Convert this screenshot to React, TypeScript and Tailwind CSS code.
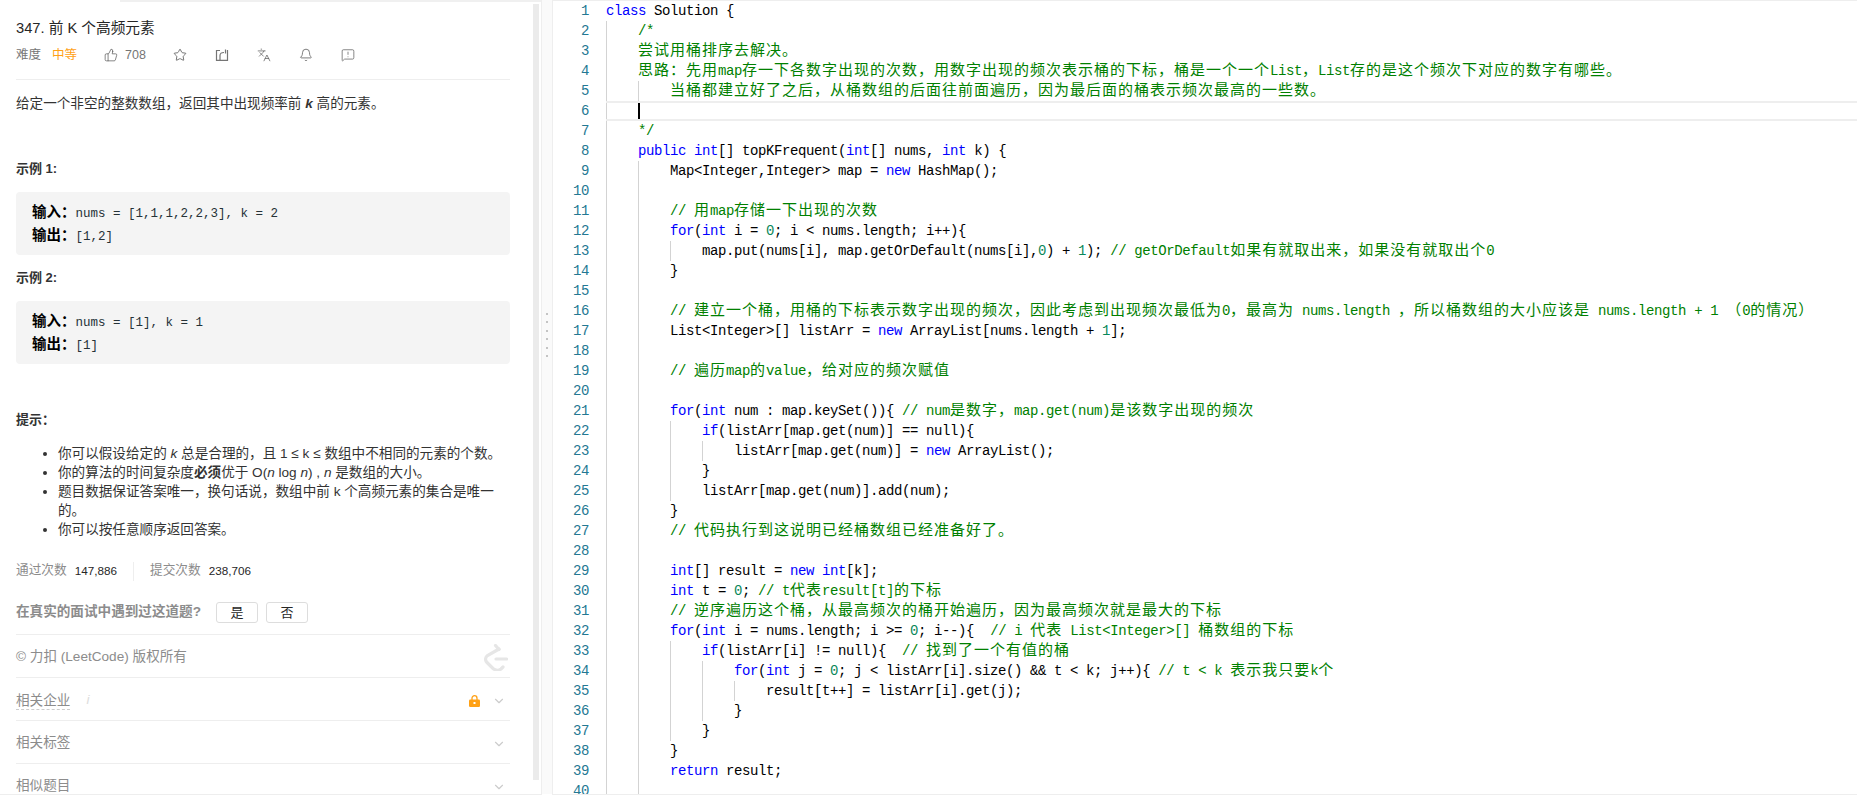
import { Bell, ChevronDown, Languages, MessageSquareWarning, Star, ThumbsUp } from "lucide-react";

const code = [
  "class Solution {",
  "    /*",
  "    尝试用桶排序去解决。",
  "    思路：先用map存一下各数字出现的次数，用数字出现的频次表示桶的下标，桶是一个一个List，List存的是这个频次下对应的数字有哪些。",
  "        当桶都建立好了之后，从桶数组的后面往前面遍历，因为最后面的桶表示频次最高的一些数。",
  "",
  "    */",
  "    public int[] topKFrequent(int[] nums, int k) {",
  "        Map<Integer,Integer> map = new HashMap();",
  "",
  "        // 用map存储一下出现的次数",
  "        for(int i = 0; i < nums.length; i++){",
  "            map.put(nums[i], map.getOrDefault(nums[i],0) + 1); // getOrDefault如果有就取出来，如果没有就取出个0",
  "        }",
  "",
  "        // 建立一个桶，用桶的下标表示数字出现的频次，因此考虑到出现频次最低为0，最高为 nums.length ，所以桶数组的大小应该是 nums.length + 1 （0的情况）",
  "        List<Integer>[] listArr = new ArrayList[nums.length + 1];",
  "",
  "        // 遍历map的value，给对应的频次赋值",
  "",
  "        for(int num : map.keySet()){ // num是数字，map.get(num)是该数字出现的频次",
  "            if(listArr[map.get(num)] == null){",
  "                listArr[map.get(num)] = new ArrayList();",
  "            }",
  "            listArr[map.get(num)].add(num);",
  "        }",
  "        // 代码执行到这说明已经桶数组已经准备好了。",
  "",
  "        int[] result = new int[k];",
  "        int t = 0; // t代表result[t]的下标",
  "        // 逆序遍历这个桶，从最高频次的桶开始遍历，因为最高频次就是最大的下标",
  "        for(int i = nums.length; i >= 0; i--){  // i 代表 List<Integer>[] 桶数组的下标",
  "            if(listArr[i] != null){  // 找到了一个有值的桶",
  "                for(int j = 0; j < listArr[i].size() && t < k; j++){ // t < k 表示我只要k个",
  "                    result[t++] = listArr[i].get(j);",
  "                }",
  "            }",
  "        }",
  "        return result;",
  "",
];

// CJK runs need to fill two monospace cells
function Cells({ text }: { text: string }) {
  const parts = text.split(/([\u3000-\u9fff\uff00-\uffef]+)/);
  return (
    <>
      {parts.map((p, i) =>
        i % 2 === 1 ? (
          <span key={i} className="text-[15px] tracking-[1px]">
            {p}
          </span>
        ) : (
          <span key={i}>{p}</span>
        )
      )}
    </>
  );
}

function CodeText({ text, comment }: { text: string; comment: boolean }) {
  if (comment) {
    return (
      <span className="text-[#008000]">
        <Cells text={text} />
      </span>
    );
  }
  const out = [];
  const re = /(\/\/.*$)|\b(class|public|int|new|for|if|return)\b|\b(\d+)\b/g;
  let last = 0;
  let m;
  while ((m = re.exec(text))) {
    if (m.index > last) out.push(<Cells key={last} text={text.slice(last, m.index)} />);
    const color = m[1] ? "text-[#008000]" : m[2] ? "text-[#0000ff]" : "text-[#09885a]";
    out.push(
      <span key={m.index} className={color}>
        <Cells text={m[0]} />
      </span>
    );
    last = m.index + m[0].length;
  }
  if (last < text.length) out.push(<Cells key={last} text={text.slice(last)} />);
  return <>{out}</>;
}

function CodeLine({ raw, index }: { raw: string; index: number }) {
  const text = raw.trimStart();
  const blank = text === "";
  const active = index === 5;
  let guides = (raw.length - text.length) / 4;
  if (blank) guides = active ? 1 : 2;
  return (
    <div className="flex h-5 shrink-0 leading-5">
      <div className="w-[53px] shrink-0 pr-[17px] text-right text-[#237893]">{index + 1}</div>
      <div
        className={
          active
            ? "flex min-w-0 flex-1 border-y-2 border-[#eeeeee] leading-4"
            : "flex min-w-0 flex-1"
        }
      >
        {Array.from({ length: guides }).map((_, g) => (
          <div key={g} className="w-8 shrink-0 border-l border-[#d3d3d3]" />
        ))}
        {active && <div className="w-[2px] bg-black" />}
        <div className="whitespace-pre text-black">
          <CodeText text={text} comment={index >= 1 && index <= 6} />
        </div>
      </div>
    </div>
  );
}

function ShareIcon() {
  return (
    <svg width="14" height="14" viewBox="0 0 14 14" fill="none" stroke="#757575" strokeWidth="1.2">
      <path d="M5 2.5H1.5v9.8h11V2" />
      <path d="M5 12V7.5C5 5.5 6.5 4.5 9 4.5" />
      <path d="M10.5 1.5v4" />
    </svg>
  );
}

function LockIcon() {
  return (
    <svg width="11" height="12" viewBox="0 0 11 12">
      <path d="M3 5V3.2a2.5 2.5 0 0 1 5 0V5" fill="none" stroke="#ffa116" strokeWidth="1.3" />
      <rect x="0" y="4.5" width="11" height="7.5" rx="1.2" fill="#ffa116" />
      <rect x="4.5" y="7" width="2" height="2" fill="#ffffff" />
    </svg>
  );
}

function LeetLogo() {
  return (
    <svg width="24" height="27" viewBox="0 0 24 27" fill="none" stroke="#e6e6e6" strokeWidth="3.2" strokeLinecap="round">
      <path d="M11.5 1.5l3.5 4" />
      <path d="M15 5L3.5 11.5c-2.5 2-2.5 5-.5 7l6 6c2.5 2 6 2 8 .5l2-2" />
      <path d="M12 15H22.5" />
    </svg>
  );
}

function InfoRow({ label, children }: { label: React.ReactNode; children?: React.ReactNode }) {
  return (
    <div className="flex h-[43px] shrink-0 items-center border-b border-[#eeeeee] pr-[4px] pt-[3px] text-[#8c8c8c]">
      {label}
      <div className="ml-auto flex items-center gap-[12px]">
        {children}
        <ChevronDown size={14} className="text-[#cccccc]" />
      </div>
    </div>
  );
}

function Example({ input, output }: { input: string; output: string }) {
  return (
    <div className="mt-[13px] h-[63px] shrink-0 rounded bg-[#f4f4f4] pl-4 pt-[10px] text-[14.5px] leading-[21px] text-[#263238]">
      <div>
        <b className="text-black">输入：</b>
        <span className="font-['Liberation_Mono',monospace] text-[12.5px]">{input}</span>
      </div>
      <div>
        <b className="text-black">输出：</b>
        <span className="font-['Liberation_Mono',monospace] text-[12.5px]">{output}</span>
      </div>
    </div>
  );
}

export default function App() {
  return (
    <div className="flex h-[799px] w-[1857px] items-start overflow-hidden bg-white font-['Liberation_Sans','Noto_Sans_CJK_SC',sans-serif]">
      {/* description panel */}
      <div className="flex h-[795px] w-[542px] shrink-0 flex-col border-b border-r border-[#eeeeee]">
        <div className="ml-[120px] h-[2px] shrink-0 bg-[#f0f0f0]" />
        <div className="flex min-h-0 flex-1">
          <div className="flex w-[533px] shrink-0 flex-col overflow-hidden pl-4 pr-[23px] pt-4 text-[13.6px] text-[#333333]">
            <div className="shrink-0 text-[14.7px] leading-5 text-[#262626]">347. 前 K 个高频元素</div>
            <div className="mt-[7px] flex h-5 shrink-0 items-center text-[12.5px] text-[#757575]">
              <span className="w-9">难度</span>
              <span className="w-[52px] text-[#ffa116]">中等</span>
              <ThumbsUp size={14} strokeWidth={1.3} className="text-[#616161]" />
              <span className="ml-[7px] w-[48px]">708</span>
              <Star size={14} strokeWidth={1.5} className="text-[#616161]" />
              <span className="ml-[28px]">
                <ShareIcon />
              </span>
              <Languages size={14} strokeWidth={1.3} className="ml-[28px] text-[#616161]" />
              <Bell size={14} strokeWidth={1.4} className="ml-[28px] text-[#616161]" />
              <MessageSquareWarning size={14} strokeWidth={1.3} className="ml-[28px] text-[#616161]" />
            </div>
            <div className="mt-[14px] h-px shrink-0 bg-[#eeeeee]" />
            <div className="mt-[14px] shrink-0 leading-5">
              给定一个非空的整数数组，返回其中出现频率前 <b className="italic">k</b> 高的元素。
            </div>
            <div className="mt-[45px] shrink-0 text-[13px] font-bold leading-5">示例 1:</div>
            <Example input="nums = [1,1,1,2,2,3], k = 2" output="[1,2]" />
            <div className="mt-[13px] shrink-0 text-[13px] font-bold leading-5">示例 2:</div>
            <Example input="nums = [1], k = 1" output="[1]" />
            <div className="mt-[46px] shrink-0 text-[13px] font-bold leading-5">提示：</div>
            <ul className="mt-[14px] shrink-0 list-disc pl-[42px] leading-[19px]">
              <li>
                你可以假设给定的 <i>k</i> 总是合理的，且 1 ≤ k ≤ 数组中不相同的元素的个数。
              </li>
              <li>
                你的算法的时间复杂度<b>必须</b>优于 O(<i>n</i> log <i>n</i>) , <i>n</i> 是数组的大小。
              </li>
              <li>
                题目数据保证答案唯一，换句话说，数组中前 k 个高频元素的集合是唯一
                <br />
                的。
              </li>
              <li>你可以按任意顺序返回答案。</li>
            </ul>
            <div className="mt-[22px] flex h-5 shrink-0 items-center text-[12.7px] text-[#8c8c8c]">
              <span>通过次数</span>
              <span className="ml-2 text-[11.7px] text-[#262626]">147,886</span>
              <div className="mx-[16px] h-[19px] w-px bg-[#eeeeee]" />
              <span>提交次数</span>
              <span className="ml-2 text-[11.7px] text-[#262626]">238,706</span>
            </div>
            <div className="mt-[21px] flex h-[21px] shrink-0 items-center text-[13.6px]">
              <b className="w-[200px] text-[#8c8c8c]">在真实的面试中遇到过这道题?</b>
              <button className="h-[21px] w-[42px] rounded-[3px] border border-[#dddddd] text-[13px] leading-none text-[#262626]">
                是
              </button>
              <button className="ml-2 h-[21px] w-[42px] rounded-[3px] border border-[#dddddd] text-[13px] leading-none text-[#262626]">
                否
              </button>
            </div>
            <div className="mt-[11px] h-px shrink-0 bg-[#eeeeee]" />
            <div className="flex h-[43px] shrink-0 items-center justify-between border-b border-[#eeeeee] pr-[2px] pt-[3px] text-[#8c8c8c]">
              <span>© 力扣 (LeetCode) 版权所有</span>
              <LeetLogo />
            </div>
            <InfoRow
              label={
                <>
                  <span className="border-b border-dashed border-[#cccccc] leading-[17px]">相关企业</span>
                  <i className="ml-4 text-[#dddddd]">i</i>
                </>
              }
            >
              <LockIcon />
            </InfoRow>
            <InfoRow label="相关标签" />
            <InfoRow label="相似题目" />
          </div>
          <div className="mt-[2px] h-[776px] w-[6px] shrink-0 bg-[#ebebeb]" />
        </div>
      </div>

      {/* drag handle */}
      <div className="flex h-[794px] w-[10px] shrink-0 flex-col items-center gap-[6.4px] bg-[#fafafa] pt-[313px]">
        {Array.from({ length: 6 }).map((_, i) => (
          <div key={i} className="h-[2px] w-[2px] bg-[#c4c4c4]" />
        ))}
      </div>

      {/* editor */}
      <div className="flex h-[795px] min-w-0 flex-1 flex-col overflow-hidden border-b border-l border-t border-[#eeeeee] font-['Liberation_Mono','Noto_Sans_CJK_SC',monospace] text-[14px] tracking-[-0.4px]">
        {code.map((raw, i) => (
          <CodeLine key={i} raw={raw} index={i} />
        ))}
      </div>
    </div>
  );
}
